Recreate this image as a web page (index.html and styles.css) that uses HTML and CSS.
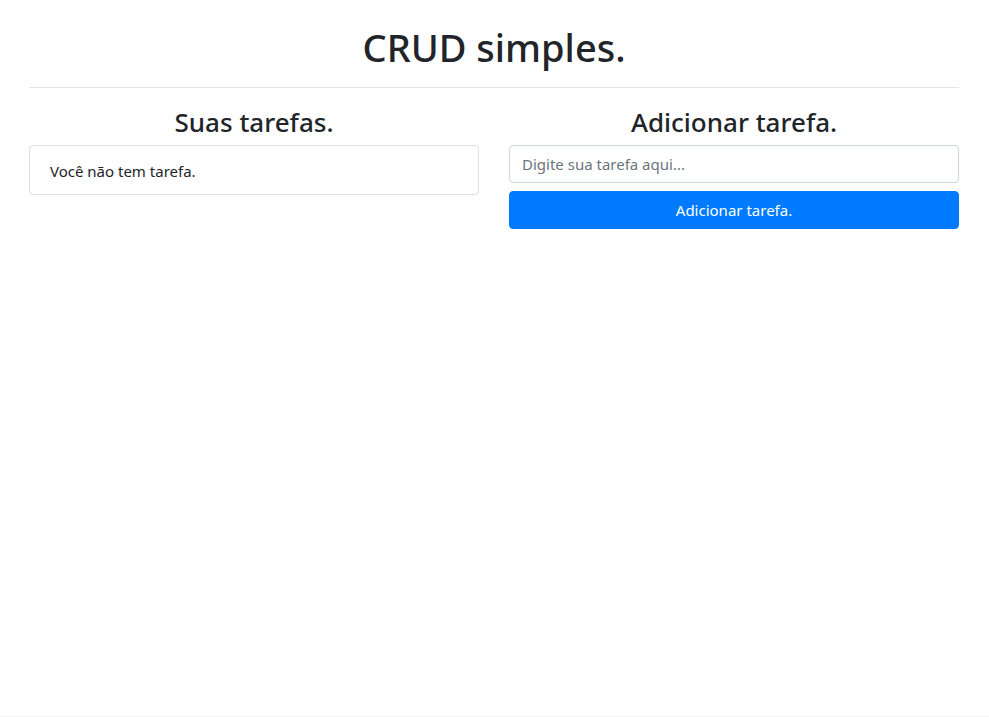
FILE: index.html
```html
<!DOCTYPE html>
<html lang="pt-br">
<head>
<meta charset="utf-8">
<title>CRUD simples.</title>
<link rel="stylesheet" href="styles.css">
</head>
<body>
<div class="container">
  <h1 class="title">CRUD simples.</h1>
  <hr class="divider">
  <div class="row">
    <div class="col">
      <h3 class="subtitle">Suas tarefas.</h3>
      <ul class="list-group">
        <li class="list-group-item">Você não tem tarefa.</li>
      </ul>
    </div>
    <div class="col">
      <h3 class="subtitle">Adicionar tarefa.</h3>
      <form class="task-form">
        <input class="form-control" type="text" placeholder="Digite sua tarefa aqui...">
        <button class="btn-primary" type="button">Adicionar tarefa.</button>
      </form>
    </div>
  </div>
</div>
<div class="bottom-line"></div>
</body>
</html>
```
FILE: styles.css
```css
* { box-sizing: border-box; }
html, body { height: 100%; }
body {
  margin: 0;
  font-family: "Noto Sans", "Open Sans", sans-serif;
  font-size: 16px;
  line-height: 1.5;
  color: #212529;
  background: #fff;
  display: flex;
  flex-direction: column;
}
.container {
  width: 960px;
  margin: 0 0 0 14px;
  padding: 23px 15px 0;
  flex: 1;
}
.title {
  margin: 0 0 8px;
  font-size: 38px;
  font-weight: 500;
  line-height: 48px;
  text-align: center;
}
.divider {
  margin: 16px 0;
  border: 0;
  border-top: 1px solid rgba(0,0,0,.1);
}
.row {
  display: grid;
  grid-template-columns: 1fr 1fr;
  column-gap: 30px;
}
.subtitle {
  margin: 0 0 6px;
  padding-top: 2px;
  font-size: 26px;
  font-weight: 500;
  line-height: 33px;
  text-align: center;
}
.list-group {
  list-style: none;
  margin: 0;
  padding: 0;
}
.list-group-item {
  padding: 13px 20px 11px;
  border: 1px solid rgba(0,0,0,.125);
  border-radius: 4px;
  font-size: 15px;
  line-height: 24px;
}
.task-form {
  display: flex;
  flex-direction: column;
  gap: 8px;
}
.form-control {
  height: 38px;
  padding: 6px 12px;
  font: inherit;
  font-size: 15px;
  color: #495057;
  border: 1px solid #ced4da;
  border-radius: 4px;
}
.form-control::placeholder { color: #6c757d; }
.btn-primary {
  height: 38px;
  padding: 6px 12px;
  font: inherit;
  font-size: 15px;
  color: #fff;
  background: #007bff;
  border: 1px solid #007bff;
  border-radius: 4px;
}
.bottom-line {
  height: 1px;
  background: #f2f2f2;
}
```
